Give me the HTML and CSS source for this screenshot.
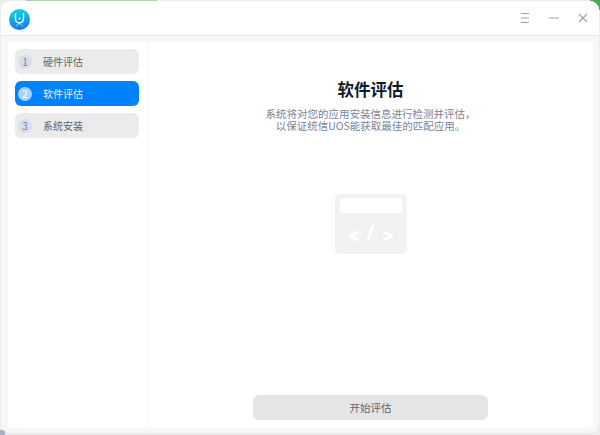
FILE: index.html
```html
<!DOCTYPE html>
<html lang="zh">
<head>
<meta charset="utf-8">
<title>软件评估</title>
<link rel="stylesheet" href="styles.css">
</head>
<body>
<div class="window">
  <header class="titlebar">
    <svg class="logo" viewBox="0 0 22 22" width="21" height="21">
      <defs><linearGradient id="lg" x1="0.4" y1="0" x2="0.55" y2="1"><stop offset="0" stop-color="#16d6dc"/><stop offset="1" stop-color="#1277ee"/></linearGradient></defs>
      <circle cx="11" cy="11" r="11" fill="url(#lg)"/>
      <path d="M6.8 5.2v5.3a4.2 4.2 0 0 0 8.4 0V5.2" fill="none" stroke="#fff" stroke-width="1.5" stroke-linecap="round"/>
      <circle cx="11" cy="10" r="1" fill="#fff"/>
      <path d="M7 18.5 11 15.2l4 3.3" fill="none" stroke="#bfefff" stroke-width="0.7"/>
    </svg>
    <div class="controls">
      <svg viewBox="0 0 12 12" width="12" height="12"><path d="M2 1.5h8M2 6h8M2 10.5h8" stroke="#9aa2b0" stroke-width="1.1" fill="none"/></svg>
      <svg viewBox="0 0 12 12" width="12" height="12"><path d="M1 6h10" stroke="#9aa2b0" stroke-width="1.1" fill="none"/></svg>
      <svg viewBox="0 0 12 12" width="12" height="12"><path d="M2 2l8 8M10 2l-8 8" stroke="#9aa2b0" stroke-width="1.1" fill="none"/></svg>
    </div>
  </header>
  <div class="content">
    <nav class="sidebar">
      <div class="step"><span class="num">1</span><span>硬件评估</span></div>
      <div class="step active"><span class="num">2</span><span>软件评估</span></div>
      <div class="step"><span class="num">3</span><span>系统安装</span></div>
    </nav>
    <main class="main">
      <h1 class="title">软件评估</h1>
      <p class="desc">系统将对您的应用安装信息进行检测并评估，<br>以保证统信UOS能获取最佳的匹配应用。</p>
      <svg class="illus" viewBox="0 0 72 60" width="72" height="60">
        <rect width="72" height="60" rx="5" fill="#f2f2f2"/>
        <rect x="5" y="4.5" width="62" height="14.5" fill="#fff"/>
        <path d="M23 38l-8 4 8 4M49 38l8 4-8 4M37.5 32.5l-4.5 14" fill="none" stroke="#fff" stroke-width="3" stroke-linecap="round" stroke-linejoin="round"/>
      </svg>
      <button class="start">开始评估</button>
    </main>
  </div>
</div>
</body>
</html>
```
FILE: styles.css
```css
* { box-sizing: border-box; }
html, body { margin: 0; height: 100%; }
body {
  width: 600px;
  height: 435px;
  overflow: hidden;
  padding: 1px 1px 2px 1px;
  background-color: #ececec;
  background-image:
    linear-gradient(#49ad58, #49ad58),
    linear-gradient(#a5b4c0, #a5b4c0),
    linear-gradient(#a8d8a0, #a8d8a0);
  background-repeat: no-repeat;
  background-size: 10px 10px, 5px 5px, 131px 2px;
  background-position: right top, left bottom, 26px 0;
  font-family: "Noto Sans CJK SC", "Noto Sans", sans-serif;
}
.window {
  height: 100%;
  display: flex;
  flex-direction: column;
  background: #f7f7f7;
  border-radius: 9px;
  overflow: hidden;
}
.titlebar {
  height: 35px;
  flex: none;
  display: flex;
  align-items: center;
  justify-content: space-between;
  padding: 0 10px 0 8px;
  background: #fff;
  border-bottom: 1px solid #e9e9e9;
}
.logo { display: block; margin-top: 3px; }
.controls { display: flex; gap: 17px; align-items: center; }
.controls svg { display: block; }
.content {
  flex: 1;
  display: flex;
  gap: 1px;
  padding: 6px 6px 5px 7px;
  min-height: 0;
}
.sidebar {
  width: 139px;
  flex: none;
  background: #fff;
  padding: 7px 8px 0 7px;
  display: flex;
  flex-direction: column;
  gap: 7px;
}
.step {
  height: 25px;
  border-radius: 6px;
  background: #ebebeb;
  display: flex;
  align-items: center;
  gap: 11px;
  padding-left: 3px;
  font-size: 10px;
  color: #5f6470;
}
.num {
  width: 14px;
  height: 14px;
  border-radius: 50%;
  background: #d8deee;
  color: #6f7da3;
  font-size: 10px;
  line-height: 14px;
  text-align: center;
}
.step.active { background: #0081ff; color: #e6f2ff; }
.step.active .num { background: #a9d2ff; color: #fff; }
.main {
  flex: 1;
  background: #fff;
  border-radius: 0 0 6px 0;
  display: flex;
  flex-direction: column;
  align-items: center;
  padding-top: 35px;
}
.title {
  margin: 0;
  font-size: 16.5px;
  line-height: 24px;
  font-weight: 700;
  color: #0d1a2b;
}
.desc {
  margin: 7px 0 0;
  font-size: 10.5px;
  line-height: 12px;
  text-align: center;
  color: #76849a;
}
.illus { margin-top: 62px; display: block; }
.start {
  margin-top: auto;
  margin-bottom: 8px;
  width: 235px;
  height: 25px;
  border: 0;
  border-radius: 6px;
  background: #e5e5e5;
  color: #5f6470;
  font: 10.5px "Noto Sans CJK SC", sans-serif;
}
```
